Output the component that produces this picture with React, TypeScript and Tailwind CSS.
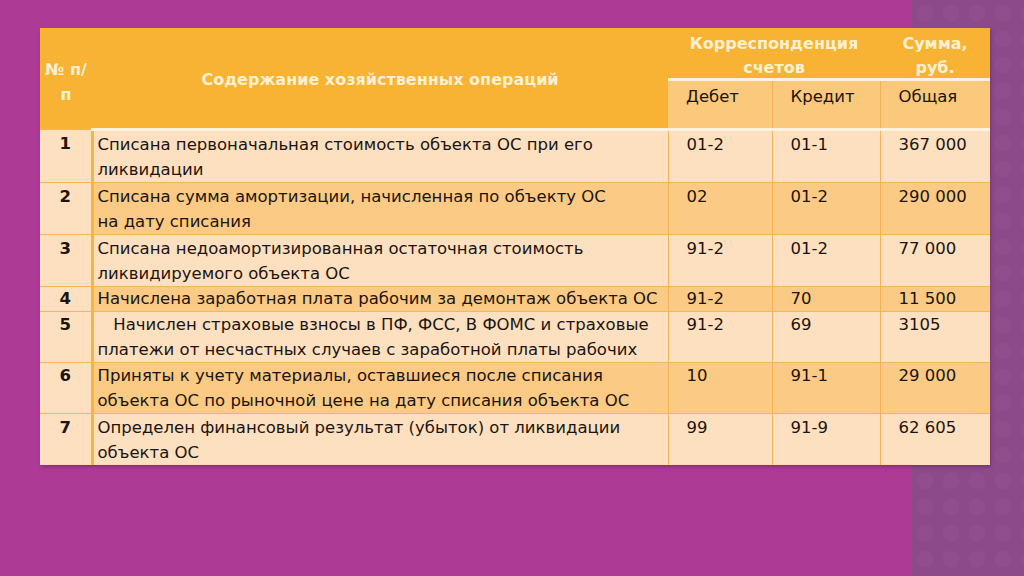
import React from 'react';

const rows = [
  { n: '1', text: 'Списана первоначальная стоимость объекта ОС при его\nликвидации', d: '01-2', k: '01-1', s: '367 000', h: 'h-[51px]', pad: 'pt-[1px]', alt: false },
  { n: '2', text: 'Списана сумма амортизации, начисленная по объекту ОС\nна дату списания', d: '02', k: '01-2', s: '290 000', h: 'h-[51px]', pad: 'pt-[1px]', alt: true },
  { n: '3', text: 'Списана недоамортизированная остаточная стоимость\nликвидируемого объекта ОС', d: '91-2', k: '01-2', s: '77 000', h: 'h-[51px]', pad: 'pt-[1px]', alt: false },
  { n: '4', text: 'Начислена заработная плата рабочим за демонтаж объекта ОС', d: '91-2', k: '70', s: '11 500', h: 'h-[24px] leading-[24px]', pad: '', alt: true },
  { n: '5', text: '   Начислен страховые взносы в ПФ, ФСС, В ФОМС и страховые\nплатежи от несчастных случаев с заработной платы рабочих', d: '91-2', k: '69', s: '3105', h: 'h-[50px]', pad: '', alt: false },
  { n: '6', text: 'Приняты к учету материалы, оставшиеся после списания\nобъекта ОС по рыночной цене на дату списания объекта ОС', d: '10', k: '91-1', s: '29 000', h: 'h-[50px]', pad: '', alt: true },
  { n: '7', text: 'Определен финансовый результат (убыток) от ликвидации\nобъекта ОС', d: '99', k: '91-9', s: '62 605', h: 'h-[51px]', pad: 'pt-[1px]', alt: false },
];

const App = () => {
  return (
    <div className="relative w-[1024px] h-[576px] overflow-hidden bg-[#ad3b96] font-['DejaVu_Sans',sans-serif]">
      {/* decorative strip on the right */}
      <div className="absolute right-0 top-0 h-full w-[112px] bg-[#8d4a8b] bg-[radial-gradient(circle,rgba(255,255,255,0.022)_45%,transparent_47%)] bg-[length:26px_26px]" />

      <div className="relative pl-[40px] pt-[28px]">
        <table className="table-fixed border-collapse w-[950px] shadow-[1px_2px_3px_rgba(80,20,60,0.35)] text-[16.5px] leading-[25px]">
          <colgroup>
            <col className="w-[52px]" />
            <col className="w-[576px]" />
            <col className="w-[104px]" />
            <col className="w-[108px]" />
            <col className="w-[110px]" />
          </colgroup>
          <thead className="text-[16px]">
            <tr className="h-[50px]">
              <th rowSpan={2} className="bg-[#f8b334] text-[#fdf1d2] font-bold text-center align-middle pt-[6px]">
                № п/<br />п
              </th>
              <th rowSpan={2} className="bg-[#f8b334] text-[#fdf1d2] font-bold text-center align-middle pt-[2px] border-b-[3px] border-[#fff3df]">
                Содержание хозяйственных операций
              </th>
              <th colSpan={2} className="bg-[#f8b334] text-[#fdf1d2] font-bold text-center align-top pt-[4px] leading-[24px]">
                <div className="h-[46px] overflow-hidden">Корреспонденция<br />счетов</div>
              </th>
              <th className="bg-[#f8b334] text-[#fdf1d2] font-bold text-center align-top pt-[4px] leading-[24px]">
                <div className="h-[46px] overflow-hidden">Сумма,<br />руб.</div>
              </th>
            </tr>
            <tr className="h-[50px] border-t-[3px] border-[#fff3df] text-[16.5px]">
              <td className="bg-[#fbc97c] text-[#1c1410] align-top pl-[18px] pt-[3px] border-r border-[#f3b25a] border-b-[3px] border-b-[#fff3df]">Дебет</td>
              <td className="bg-[#fbc97c] text-[#1c1410] align-top pl-[18px] pt-[3px] border-r border-[#f3b25a] border-b-[3px] border-b-[#fff3df]">Кредит</td>
              <td className="bg-[#fbc97c] text-[#1c1410] align-top pl-[18px] pt-[3px] border-b-[3px] border-b-[#fff3df]">Общая</td>
            </tr>
          </thead>
          <tbody className="text-[#1c1410]">
            {rows.map((r) => {
              const bg = r.alt ? 'bg-[#fbca84]' : 'bg-[#fde0bf]';
              return (
                <tr key={r.n} className={`${r.h} border-t border-[#f4b55c]`}>
                  <td className={`bg-[#fde0bf] font-bold text-center align-top border-r-[3px] border-[#f7b43e] ${r.pad}`}>{r.n}</td>
                  <td className={`${bg} align-top pl-[4px] whitespace-pre border-r border-[#f3b25a] ${r.pad}`}>{r.text}</td>
                  <td className={`${bg} align-top pl-[18px] border-r border-[#f3b25a] ${r.pad}`}>{r.d}</td>
                  <td className={`${bg} align-top pl-[18px] border-r border-[#f3b25a] ${r.pad}`}>{r.k}</td>
                  <td className={`${bg} align-top pl-[18px] ${r.pad}`}>{r.s}</td>
                </tr>
              );
            })}
          </tbody>
        </table>
      </div>
    </div>
  );
};

export default App;
